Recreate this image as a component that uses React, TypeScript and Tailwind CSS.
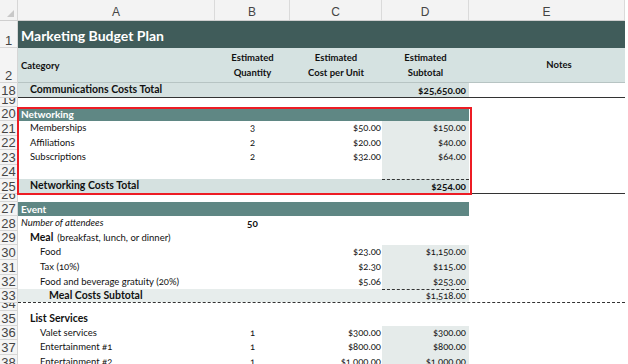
import type { ReactNode } from 'react'

const cellFont = "font-['Lato','Open_Sans',sans-serif] [font-variant-numeric:oldstyle-nums]"

function Cell({ w, className = '', children }: { w: string; className?: string; children?: ReactNode }) {
  return (
    <div className={`${w} shrink-0 h-full flex items-center overflow-hidden whitespace-nowrap ${className}`}>
      {children}
    </div>
  )
}

function Row({ n, h, className = '', children }: { n: number; h: string; className?: string; children?: ReactNode }) {
  return (
    <div className={`flex ${h}`}>
      <div className="w-[18px] shrink-0 flex items-end justify-center overflow-hidden bg-[#f4f4f4] border-r border-b border-[#d6d6d6] text-[13px] leading-[13px] text-[#444] font-['Liberation_Sans',sans-serif]">
        {n}
      </div>
      <div className={`flex flex-1 min-w-0 ${className}`}>{children}</div>
    </div>
  )
}

const A = 'w-[197px]'
const B = 'w-[75px]'
const C = 'w-[92px]'
const D = 'w-[87px]'
const E = 'w-[156px]'

const band = 'bg-[#5f8784] text-white font-bold text-[10px]'
const total = 'bg-[#d5e1e0]'
const subFill = 'bg-[#e5ebea]'

function ItemRow({ n, h, label, qty, cost, sub, indent }: { n: number; h: string; label: string; qty?: string; cost: string; sub: string; indent: string }) {
  return (
    <Row n={n} h={h}>
      <Cell w={A} className={indent}>{label}</Cell>
      <Cell w={B} className="justify-center">{qty}</Cell>
      <Cell w={C} className="justify-end pr-[1px]">{cost}</Cell>
      <Cell w={D} className={`justify-end pr-[3px] ${subFill}`}>{sub}</Cell>
      <Cell w={E} />
    </Row>
  )
}

export default function App() {
  return (
    <div className={`relative w-[628px] h-[364px] overflow-hidden bg-white text-[9.5px] text-[#111] ${cellFont}`}>
      <div className="w-[625px]">
        {/* column letters */}
        <div className="flex h-[21px] bg-[#f3f3f3] border-b border-[#cfcfcf] text-[12px] text-[#444] font-['Liberation_Sans',sans-serif]">
          <div className="w-[18px] shrink-0 relative border-r border-[#d6d6d6]">
            <svg className="absolute right-[3px] bottom-[3px]" width="7" height="7" viewBox="0 0 7 7">
              <path d="M7 0V7H0Z" fill="#c8c8c8" />
            </svg>
          </div>
          {[['A', A], ['B', B], ['C', C], ['D', D], ['E', E]].map(([l, w]) => (
            <div key={l} className={`${w} shrink-0 flex items-center justify-center pt-[3px] border-r border-[#dadada]`}>{l}</div>
          ))}
        </div>

        <Row n={1} h="h-[27px]" className="bg-[#405c5a]">
          <Cell w={A} className="pl-[3px] pt-[2px] text-white font-bold text-[14px]">Marketing Budget Plan</Cell>
        </Row>

        <Row n={2} h="h-[35px]" className="bg-[#d5e2e1] border-b border-[#b7c4c3] font-bold">
          <Cell w={A} className="pl-[3px] pt-[2px]">Category</Cell>
          <Cell w={B} className="flex-col justify-center text-center leading-[15px]"><span>Estimated</span><span>Quantity</span></Cell>
          <Cell w={C} className="flex-col justify-center text-center leading-[15px]"><span>Estimated</span><span>Cost per Unit</span></Cell>
          <Cell w={D} className="flex-col justify-center text-center leading-[15px]"><span>Estimated</span><span>Subtotal</span></Cell>
          <Cell w={E} className="justify-center pl-[24px]">Notes</Cell>
        </Row>

        <Row n={18} h="h-[15px]" className="border-b border-[#333] font-bold">
          <Cell w={A} className={`${total} pl-[12px] text-[10.5px]`}>Communications Costs Total</Cell>
          <Cell w={B} className={total} />
          <Cell w={C} className={total} />
          <Cell w={D} className={`${total} justify-end pr-[3px] text-[10px]`}>$25,650.00</Cell>
          <Cell w={E} />
        </Row>

        <Row n={19} h="h-[9px]" />

        <Row n={20} h="h-[14px]">
          <Cell w={A} className={`${band} pl-[3px]`}>Networking</Cell>
          <Cell w={B} className={band} />
          <Cell w={C} className={band} />
          <Cell w={D} className={band} />
        </Row>

        <ItemRow n={21} h="h-[15px]" indent="pl-[12px]" label="Memberships" qty="3" cost="$50.00" sub="$150.00" />
        <ItemRow n={22} h="h-[14px]" indent="pl-[12px]" label="Affiliations" qty="2" cost="$20.00" sub="$40.00" />
        <ItemRow n={23} h="h-[15px]" indent="pl-[12px]" label="Subscriptions" qty="2" cost="$32.00" sub="$64.00" />
        <ItemRow n={24} h="h-[14px]" indent="pl-[12px]" label="" cost="" sub="" />

        <Row n={25} h="h-[15px]" className="border-b border-[#333] font-bold">
          <Cell w={A} className={`${total} pl-[12px] text-[10.5px]`}>Networking Costs Total</Cell>
          <Cell w={B} className={total} />
          <Cell w={C} className={total} />
          <Cell w={D} className={`${total} justify-end pr-[3px] text-[10px] border-t border-dashed border-[#333]`}>$254.00</Cell>
          <Cell w={E} />
        </Row>

        <Row n={26} h="h-[8px]" />

        <Row n={27} h="h-[14px]">
          <Cell w={A} className={`${band} pl-[3px]`}>Event</Cell>
          <Cell w={B} className={band} />
          <Cell w={C} className={band} />
          <Cell w={D} className={band} />
        </Row>

        <Row n={28} h="h-[15px]">
          <Cell w={A} className="pl-[3px] italic">Number of attendees</Cell>
          <Cell w={B} className="justify-center font-bold text-[10px]">50</Cell>
        </Row>

        <Row n={29} h="h-[14px]">
          <Cell w={A} className="pl-[12px]"><span className="font-bold text-[10.5px] mr-[4px]">Meal</span>(breakfast, lunch, or dinner)</Cell>
        </Row>

        <ItemRow n={30} h="h-[15px]" indent="pl-[22px]" label="Food" cost="$23.00" sub="$1,150.00" />
        <ItemRow n={31} h="h-[15px]" indent="pl-[22px]" label="Tax (10%)" cost="$2.30" sub="$115.00" />
        <ItemRow n={32} h="h-[14px]" indent="pl-[22px]" label="Food and beverage gratuity (20%)" cost="$5.06" sub="$253.00" />

        <Row n={33} h="h-[14px]" className="border-b border-dashed border-[#333]">
          <Cell w={A} className="bg-[#e7edec] pl-[31px] font-bold text-[10.5px]">Meal Costs Subtotal</Cell>
          <Cell w={B} className="bg-[#e7edec]" />
          <Cell w={C} className="bg-[#e7edec]" />
          <Cell w={D} className="bg-[#e7edec] justify-end pr-[3px] border-t border-dashed border-[#333]">$1,518.00</Cell>
          <Cell w={E} />
        </Row>

        <Row n={34} h="h-[8px]" />

        <Row n={35} h="h-[15px]">
          <Cell w={A} className="pl-[12px] font-bold text-[10.5px]">List Services</Cell>
        </Row>

        <ItemRow n={36} h="h-[14px]" indent="pl-[22px]" label="Valet services" qty="1" cost="$300.00" sub="$300.00" />
        <ItemRow n={37} h="h-[15px]" indent="pl-[22px]" label="Entertainment #1" qty="1" cost="$800.00" sub="$800.00" />
        <ItemRow n={38} h="h-[15px]" indent="pl-[22px]" label="Entertainment #2" qty="1" cost="$1,000.00" sub="$1,000.00" />
      </div>

      {/* highlight box */}
      <div className="absolute left-[17px] top-[107px] w-[455px] h-[88px] border-2 border-[#ed1c24]" />
    </div>
  )
}
